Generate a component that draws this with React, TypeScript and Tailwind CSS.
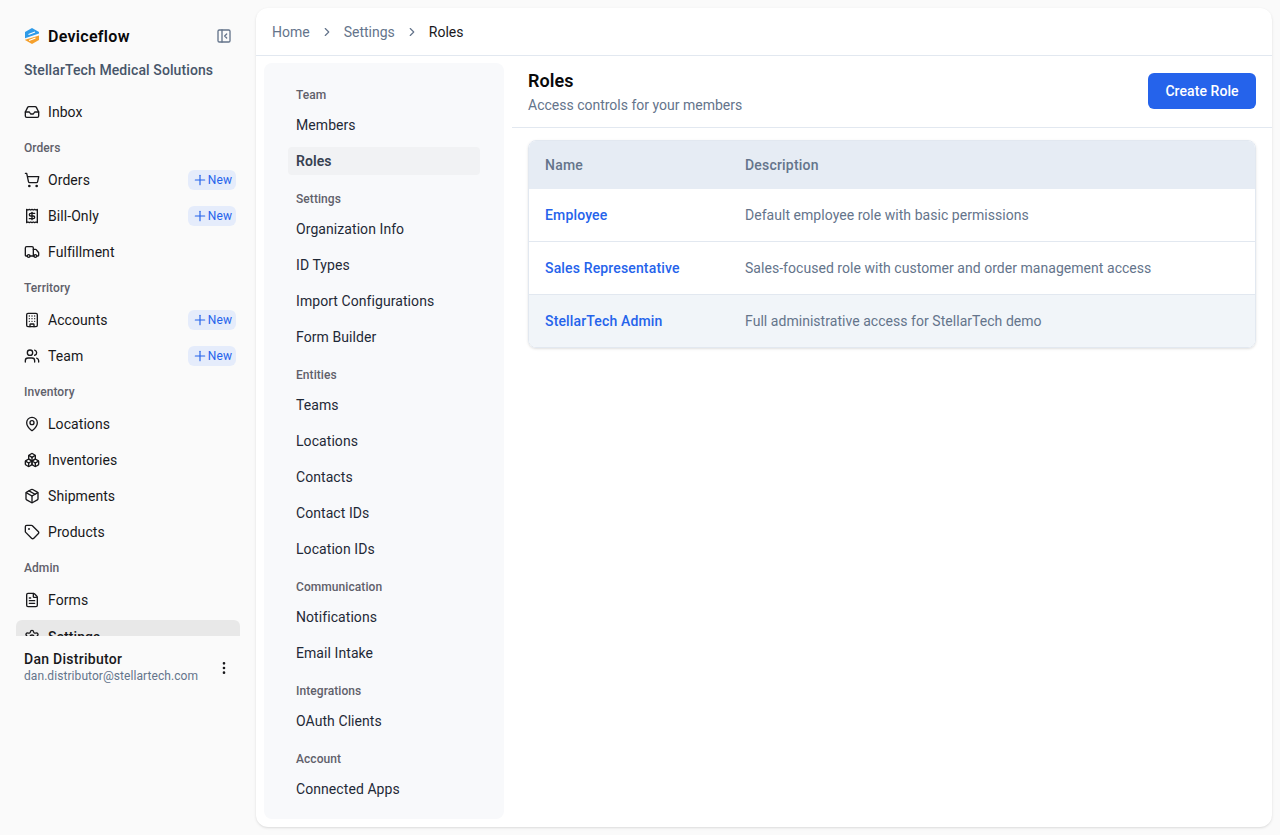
import {
  Boxes,
  Building,
  ChevronRight,
  EllipsisVertical,
  FileText,
  Inbox,
  MapPin,
  Package,
  PanelLeftClose,
  Plus,
  Receipt,
  Settings,
  ShoppingCart,
  Tag,
  Truck,
  Users,
} from "lucide-react";
import type { ComponentType } from "react";

type NavEntry = { label: string; icon: ComponentType<{ className?: string; strokeWidth?: number }>; isNew?: boolean };

const navGroups: { title?: string; items: NavEntry[] }[] = [
  { items: [{ label: "Inbox", icon: Inbox }] },
  {
    title: "Orders",
    items: [
      { label: "Orders", icon: ShoppingCart, isNew: true },
      { label: "Bill-Only", icon: Receipt, isNew: true },
      { label: "Fulfillment", icon: Truck },
    ],
  },
  {
    title: "Territory",
    items: [
      { label: "Accounts", icon: Building, isNew: true },
      { label: "Team", icon: Users, isNew: true },
    ],
  },
  {
    title: "Inventory",
    items: [
      { label: "Locations", icon: MapPin },
      { label: "Inventories", icon: Boxes },
      { label: "Shipments", icon: Package },
      { label: "Products", icon: Tag },
    ],
  },
  { title: "Admin", items: [{ label: "Forms", icon: FileText }] },
];

const settingsNav: { title: string; items: string[] }[] = [
  { title: "Team", items: ["Members", "Roles"] },
  { title: "Settings", items: ["Organization Info", "ID Types", "Import Configurations", "Form Builder"] },
  { title: "Entities", items: ["Teams", "Locations", "Contacts", "Contact IDs", "Location IDs"] },
  { title: "Communication", items: ["Notifications", "Email Intake"] },
  { title: "Integrations", items: ["OAuth Clients"] },
  { title: "Account", items: ["Connected Apps"] },
];

const roles = [
  { name: "Employee", description: "Default employee role with basic permissions" },
  { name: "Sales Representative", description: "Sales-focused role with customer and order management access" },
  { name: "StellarTech Admin", description: "Full administrative access for StellarTech demo", hovered: true },
];

function Logo() {
  return (
    <svg viewBox="0 0 16 16" className="h-4 w-4 shrink-0">
      <path d="M8 0 15 4V5.6L1 10.2V4Z" fill="#2f9be8" />
      <path d="M15 7.4V12L8 16 1 12V11.8Z" fill="#f5a02c" />
      <path d="M4.5 6.6 11 4M5 12.6 11.5 10" stroke="#ffffff" strokeWidth="1.1" />
    </svg>
  );
}

function Sidebar() {
  return (
    <aside className="flex h-full w-[256px] shrink-0 flex-col">
      <div className="h-20 shrink-0 px-6 pt-6">
        <div className="flex h-6 items-center gap-2">
          <Logo />
          <span className="mt-[2px] text-base font-semibold tracking-[0.3px] text-[#09090b]">Deviceflow</span>
          <PanelLeftClose className="ml-auto h-4 w-4 text-[#64748b]" />
        </div>
        <div className="mt-3 text-sm font-medium leading-5 tracking-[0.1px] text-[#475569]">
          StellarTech Medical Solutions
        </div>
      </div>
      <nav className="h-[556px] shrink-0 overflow-hidden px-4 pt-[14px]">
        {navGroups.map((group, i) => (
          <div key={i} className={group.title ? "mt-[5px]" : ""}>
            {group.title && (
              <div className="mb-[3px] flex h-6 items-center px-2 pt-0.5 text-xs font-medium text-[#60606a]">{group.title}</div>
            )}
            {group.items.map((item) => (
              <div key={item.label} className="flex h-9 items-center gap-2 px-2 text-sm text-[#18181b]">
                <item.icon className="h-4 w-4 shrink-0" strokeWidth={2} />
                <span>{item.label}</span>
                {item.isNew && (
                  <span className="ml-auto mr-[-4px] flex h-5 items-center rounded-md bg-[#e5ecfb] pl-1 pr-1 text-xs text-[#2563eb]">
                    <Plus className="h-4 w-4" strokeWidth={1.75} />
                    New
                  </span>
                )}
              </div>
            ))}
          </div>
        ))}
        <div className="mt-[2px] flex h-[34px] items-center gap-2 rounded-md bg-[#e8e8e8] px-2 text-sm font-medium text-[#18181b]">
          <Settings className="h-4 w-4 shrink-0" strokeWidth={2} />
          <span>Settings</span>
        </div>
      </nav>
      <div className="flex items-center justify-between px-6 pt-[14px]">
        <div>
          <div className="text-sm font-medium leading-[18px] tracking-[0.27px] text-[#18181b]">Dan Distributor</div>
          <div className="text-xs leading-[17px] text-[#64748b]">dan.distributor@stellartech.com</div>
        </div>
        <EllipsisVertical className="h-4 w-4 text-[#18181b]" />
      </div>
    </aside>
  );
}

function SettingsNav() {
  return (
    <div className="h-[756px] w-[240px] shrink-0 rounded-lg bg-[#f8f9fb] px-6 pt-[19px]">
      {settingsNav.map((group, i) => (
        <div key={group.title} className={i ? "mt-[7px]" : ""}>
          <div className="mb-[1px] flex h-6 items-center px-2 pt-0.5 text-xs font-medium text-[#60606a]">{group.title}</div>
          {group.items.map((label) =>
            label === "Roles" ? (
              <div key={label} className="flex h-9 items-center">
                <div className="flex h-7 w-full items-center rounded bg-[#f1f2f4] px-2 text-sm font-semibold text-[#374151]">
                  {label}
                </div>
              </div>
            ) : (
              <div key={label} className="flex h-9 items-center px-2 text-sm text-[#1f2937]">
                {label}
              </div>
            ),
          )}
        </div>
      ))}
    </div>
  );
}

function RolesTable() {
  return (
    <div className="mx-4 mt-3 overflow-hidden rounded-lg border border-[#e2e8f0] shadow-sm">
      <div className="flex h-12 items-center bg-[#e6ecf4] text-sm font-medium tracking-[0.2px] text-[#64748b]">
        <div className="w-[216px] pl-4">Name</div>
        <div>Description</div>
      </div>
      {roles.map((role) => (
        <div
          key={role.name}
          className={`flex h-[53px] items-center border-b border-[#e2e8f0] text-sm last:h-[52px] last:border-b-0 ${role.hovered ? "bg-[#f1f5f9]" : "bg-white"}`}
        >
          <div className="w-[216px] pl-4 font-medium tracking-[0.15px] text-[#2563eb]">{role.name}</div>
          <div className="tracking-[0.04px] text-[#64748b]">{role.description}</div>
        </div>
      ))}
    </div>
  );
}

export default function App() {
  return (
    <div className="flex h-[835px] w-[1280px] overflow-hidden bg-[#fafafa] font-['Roboto',sans-serif] tracking-[0.07px]">
      <Sidebar />
      <main className="mb-2 mr-2 mt-2 flex min-w-0 flex-1 flex-col overflow-hidden rounded-xl bg-white shadow-sm">
        <header className="flex h-12 shrink-0 items-center border-b border-[#e2e8f0] px-4 text-sm tracking-normal">
          <span className="text-[#64748b]">Home</span>
          <ChevronRight className="mx-[10px] h-[14px] w-[14px] text-[#64748b]" />
          <span className="text-[#64748b]">Settings</span>
          <ChevronRight className="mx-[10px] h-[14px] w-[14px] text-[#64748b]" />
          <span className="text-[#18181b]">Roles</span>
        </header>
        <div className="flex min-h-0 flex-1">
          <div className="pl-2 pt-[7px]">
            <SettingsNav />
          </div>
          <section className="ml-2 min-w-0 flex-1">
            <div className="flex h-[72px] items-center justify-between border-b border-[#e2e8f0] px-4 pb-[1px]">
              <div>
                <h1 className="text-lg font-semibold leading-7 text-[#09090b]">Roles</h1>
                <p className="text-sm leading-5 tracking-normal text-[#64748b]">Access controls for your members</p>
              </div>
              <button className="h-9 w-[108px] rounded-md bg-[#2563eb] text-sm font-medium text-white">Create Role</button>
            </div>
            <RolesTable />
          </section>
        </div>
      </main>
    </div>
  );
}
